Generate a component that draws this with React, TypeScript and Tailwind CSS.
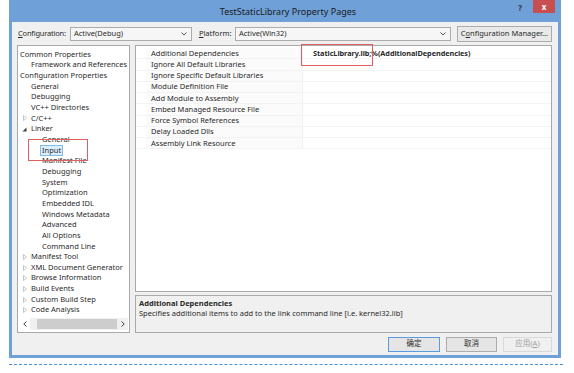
import React from "react";

const tree: { t: string; l: number; a?: "c" | "e"; sel?: boolean }[] = [
  { t: "Common Properties", l: 0 },
  { t: "Framework and References", l: 1 },
  { t: "Configuration Properties", l: 0 },
  { t: "General", l: 1 },
  { t: "Debugging", l: 1 },
  { t: "VC++ Directories", l: 1 },
  { t: "C/C++", l: 1, a: "c" },
  { t: "Linker", l: 1, a: "e" },
  { t: "General", l: 2 },
  { t: "Input", l: 2, sel: true },
  { t: "Manifest File", l: 2 },
  { t: "Debugging", l: 2 },
  { t: "System", l: 2 },
  { t: "Optimization", l: 2 },
  { t: "Embedded IDL", l: 2 },
  { t: "Windows Metadata", l: 2 },
  { t: "Advanced", l: 2 },
  { t: "All Options", l: 2 },
  { t: "Command Line", l: 2 },
  { t: "Manifest Tool", l: 1, a: "c" },
  { t: "XML Document Generator", l: 1, a: "c" },
  { t: "Browse Information", l: 1, a: "c" },
  { t: "Build Events", l: 1, a: "c" },
  { t: "Custom Build Step", l: 1, a: "c" },
  { t: "Code Analysis", l: 1, a: "c" },
];

const props = [
  "Additional Dependencies",
  "Ignore All Default Libraries",
  "Ignore Specific Default Libraries",
  "Module Definition File",
  "Add Module to Assembly",
  "Embed Managed Resource File",
  "Force Symbol References",
  "Delay Loaded Dlls",
  "Assembly Link Resource",
];

const font = { fontFamily: '"Noto Sans", "Noto Sans CJK SC", sans-serif' };

function Chevron() {
  return (
    <svg width="6" height="4" viewBox="0 0 6 4" className="shrink-0">
      <path d="M0.5 0.5 L3 3 L5.5 0.5" fill="none" stroke="#555" strokeWidth="1" />
    </svg>
  );
}

export default function App() {
  return (
    <div className="w-[574px] h-[373px] bg-white relative overflow-hidden text-[#2a2a2a]" style={font}>
      <div className="ml-[9px] w-[552px] h-[358px] bg-[#6fa0d8] flex flex-col px-[3px] pb-[3px] relative">
        {/* Title bar */}
        <div className="h-[22px] shrink-0 flex items-center justify-center relative">
          <span className="text-[9px] text-[#1a1a1a] leading-none pt-[1px] pl-[6px]">TestStaticLibrary Property Pages</span>
          <span className="absolute right-[36px] top-[2px] text-[8px] font-bold text-[#333]">?</span>
          <div className="absolute right-[3px] top-0 w-[22px] h-[13px] bg-[#c74f4f] flex items-center justify-center">
            <span className="text-white text-[8px] font-bold leading-none">x</span>
          </div>
        </div>
        {/* Content */}
        <div className="flex-1 bg-[#f0f0f0] flex flex-col pl-[5px] pr-[6px]">
          {/* toolbar */}
          <div className="h-[23px] shrink-0 flex items-center text-[7.5px]">
            <span className="shrink-0 whitespace-nowrap pl-[1px] tracking-[-0.2px]"><u>C</u>onfiguration:</span>
            <div className="ml-[4px] w-[122px] shrink-0 h-[14px] bg-[#f6f6f6] border border-[#acacac] flex items-center justify-between pl-[3px] pr-[4px]">
              <span>Active(Debug)</span>
              <Chevron />
            </div>
            <span className="ml-[7px] w-[36px] shrink-0 whitespace-nowrap"><u>P</u>latform:</span>
            <div className="w-[216px] shrink-0 h-[14px] bg-[#f6f6f6] border border-[#acacac] flex items-center justify-between pl-[3px] pr-[4px]">
              <span>Active(Win32)</span>
              <Chevron />
            </div>
            <div className="ml-[6px] flex-1 h-[16px] bg-[#e9e9e9] border border-[#acacac] flex items-center justify-center whitespace-nowrap">
              <span>C<u>o</u>nfiguration Manager...</span>
            </div>
          </div>
          {/* main */}
          <div className="flex-1 flex gap-[5px] min-h-0">
            {/* tree */}
            <div className="w-[113px] bg-white border border-[#a9a9a9] flex flex-col pt-[3px] relative">
              <div className="flex-1 text-[7.5px]">
                {tree.map((it, i) => (
                  <div
                    key={i}
                    className="h-[10.67px] flex items-center relative"
                    style={{ paddingLeft: 2 + it.l * 11 }}
                  >
                    {it.a === "c" && (
                      <svg width="4" height="6" viewBox="0 0 4 6" className="absolute left-[5px] top-[2.5px]">
                        <path d="M0.5 0.5 L3.5 3 L0.5 5.5 Z" fill="none" stroke="#b8b8b8" strokeWidth="0.8" />
                      </svg>
                    )}
                    {it.a === "e" && (
                      <svg width="5" height="5" viewBox="0 0 5 5" className="absolute left-[4px] top-[3px]">
                        <path d="M4.5 0.5 L4.5 4.5 L0.5 4.5 Z" fill="#404040" />
                      </svg>
                    )}
                    {it.sel ? (
                      <span className="bg-[#dbeefc] border border-[#7fbde8] px-[1px] -ml-[2px] leading-[9px]">{it.t}</span>
                    ) : (
                      <span className="whitespace-nowrap">{it.t}</span>
                    )}
                  </div>
                ))}
              </div>
              {/* horizontal scrollbar */}
              <div className="h-[12px] mx-[1px] mb-[2px] flex items-center text-[#555]">
                <div className="w-[12px] h-full flex items-center justify-center">
                  <svg width="4" height="6" viewBox="0 0 4 6"><path d="M3.5 0.5 L0.8 3 L3.5 5.5" fill="none" stroke="#444" strokeWidth="1" /></svg>
                </div>
                <div className="flex-1 h-full bg-[#f0f0f0] flex items-center">
                  <div className="ml-[7px] w-[80px] h-[10px] bg-[#cdcdcd]" />
                </div>
                <div className="w-[12px] h-full flex items-center justify-center bg-[#f0f0f0]">
                  <svg width="4" height="6" viewBox="0 0 4 6"><path d="M0.5 0.5 L3.2 3 L0.5 5.5" fill="none" stroke="#444" strokeWidth="1" /></svg>
                </div>
              </div>
            </div>
            {/* right */}
            <div className="flex-1 flex flex-col gap-[3px]">
              <div className="flex-1 bg-white border border-[#a9a9a9] pt-[2px] text-[7.5px]">
                {props.map((p, i) => (
                  <div key={i} className="h-[11.25px] flex border-b border-[#f3f3f3]">
                    <div className="w-[10px] bg-white" />
                    <div className="w-[157px] pl-[5px] flex items-center bg-[#fbfbfb] border-r border-[#f0f0f0]">{p}</div>
                    <div className="flex-1 pl-[10px] flex items-center font-bold text-[7.3px] tracking-[-0.05px]">
                      {i === 0 ? "StaticLibrary.lib;%(AdditionalDependencies)" : ""}
                    </div>
                  </div>
                ))}
              </div>
              <div className="h-[38px] bg-[#f0f0f0] border border-[#a9a9a9] px-[3px] pt-[2px] text-[7.5px] leading-[10px]">
                <div className="font-bold">Additional Dependencies</div>
                <div>Specifies additional items to add to the link command line [i.e. kernel32.lib]</div>
              </div>
            </div>
          </div>
          {/* buttons */}
          <div className="h-[22px] shrink-0 flex items-center justify-end gap-[6px] text-[7.5px]">
            <div className="w-[52px] h-[15px] bg-[#e5e5e5] border border-[#5a9be0] flex items-center justify-center">确定</div>
            <div className="w-[51px] h-[15px] bg-[#e5e5e5] border border-[#acacac] flex items-center justify-center">取消</div>
            <div className="w-[49px] h-[15px] bg-[#f0f0f0] border border-[#d9d9d9] flex items-center justify-center text-[#a0a0a0]">应用(<u>A</u>)</div>
          </div>
        </div>
      </div>
      <div className="ml-[9px] mt-[6px] w-[554px] border-t border-dashed border-[#4a8fe0]" />
      {/* red annotation boxes */}
      <div className="absolute left-[28px] top-[139px] w-[60px] h-[22px] border border-[#e06060]" />
      <div className="absolute left-[301px] top-[44px] w-[72px] h-[22px] border border-[#e06060]" />
    </div>
  );
}
